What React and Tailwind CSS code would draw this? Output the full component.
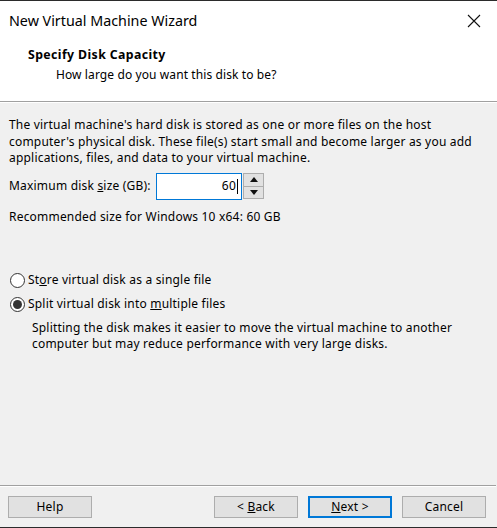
import React from "react";

const font = { fontFamily: '"Noto Sans", "Open Sans", sans-serif' };

const Radio = ({ checked, children }) => (
  <div className="flex items-center h-[16px]">
    <span className="w-[15px] h-[15px] rounded-full border border-[#333] bg-white flex items-center justify-center mr-[3px] ml-[10px]">
      {checked && <span className="w-[9px] h-[9px] rounded-full bg-[#333]" />}
    </span>
    <span>{children}</span>
  </div>
);

const Btn = ({ children, primary }) => (
  <button
    className={
      "w-[84px] h-[22px] flex items-center justify-center bg-[#e1e1e1] text-[12px] tracking-[0.2px] " +
      (primary ? "border-2 border-[#0078d7]" : "border border-[#adadad]")
    }
  >
    {children}
  </button>
);

export default function App() {
  return (
    <div
      className="w-[497px] h-[528px] bg-[#f0f0f0] border-t border-b border-[#2b2b2b] flex flex-col text-black text-[12px] leading-[16px] tracking-[0.2px]"
      style={font}
    >
      {/* header */}
      <div className="bg-white h-[100px] flex flex-col">
        <div className="h-[39px] flex items-center justify-between pl-[9px] pr-[16px]">
          <span className="text-[14.3px] tracking-normal">New Virtual Machine Wizard</span>
          <svg width="14" height="14" viewBox="0 0 14 14">
            <path d="M1 1 L13 13 M13 1 L1 13" stroke="#111" strokeWidth="1.1" />
          </svg>
        </div>
        <div className="pl-[28px] mt-[7px] font-bold text-[12.3px] tracking-[0.4px]">Specify Disk Capacity</div>
        <div className="pl-[56px] mt-[4px] tracking-[0.1px]">How large do you want this disk to be?</div>
      </div>
      <div className="h-px bg-[#a0a0a0]" />
      <div className="h-px bg-white" />

      {/* body */}
      <div className="px-[9px] pt-[14px] leading-[16.5px]">
        <p>
          The virtual machine's hard disk is stored as one or more files on the host
          <br />
          computer's physical disk. These file(s) start small and become larger as you add
          <br />
          applications, files, and data to your virtual machine.
        </p>
        <div className="flex items-center mt-[6px] h-[27px]">
          <span className="w-[147px]">
            Maximum disk <span className="underline">s</span>ize (GB):
          </span>
          <div className="w-[86px] h-[27px] bg-white border border-[#0078d7] flex items-center justify-end pr-[3px]">
            <span>60</span>
            <span className="w-px h-[15px] bg-black ml-px" />
          </div>
          <div className="w-[21px] h-[26px] flex flex-col ml-px">
            <div className="flex-1 bg-[#e1e1e1] border border-[#adadad] flex items-center justify-center">
              <svg width="8" height="5" viewBox="0 0 8 5"><path d="M0 5 L4 0 L8 5 Z" fill="#111" /></svg>
            </div>
            <div className="flex-1 bg-[#e1e1e1] border border-t-0 border-[#adadad] flex items-center justify-center">
              <svg width="8" height="5" viewBox="0 0 8 5"><path d="M0 0 L4 5 L8 0 Z" fill="#111" /></svg>
            </div>
          </div>
        </div>
        <p className="mt-[9px]">Recommended size for Windows 10 x64: 60 GB</p>
      </div>

      <div className="mt-[47px] flex flex-col gap-[8px]">
        <Radio>
          St<span className="underline">o</span>re virtual disk as a single file
        </Radio>
        <Radio checked>
          Split virtual disk into <span className="underline">m</span>ultiple files
        </Radio>
      </div>
      <p className="pl-[32px] mt-[8px] leading-[16px]">
        Splitting the disk makes it easier to move the virtual machine to another
        <br />
        computer but may reduce performance with very large disks.
      </p>

      <div className="flex-1" />

      {/* footer */}
      <div className="mr-px h-px bg-[#a0a0a0]" />
      <div className="mr-px h-px bg-white" />
      <div className="flex items-center px-[8px] mt-[9px] mb-[9px]">
        <Btn>Help</Btn>
        <div className="flex-1" />
        <div className="flex gap-[10px] mr-[3px]">
          <Btn>
            &lt;&nbsp;<span className="underline">B</span>ack
          </Btn>
          <Btn primary>
            <span className="underline">N</span>ext &gt;
          </Btn>
          <Btn>Cancel</Btn>
        </div>
      </div>
    </div>
  );
}
